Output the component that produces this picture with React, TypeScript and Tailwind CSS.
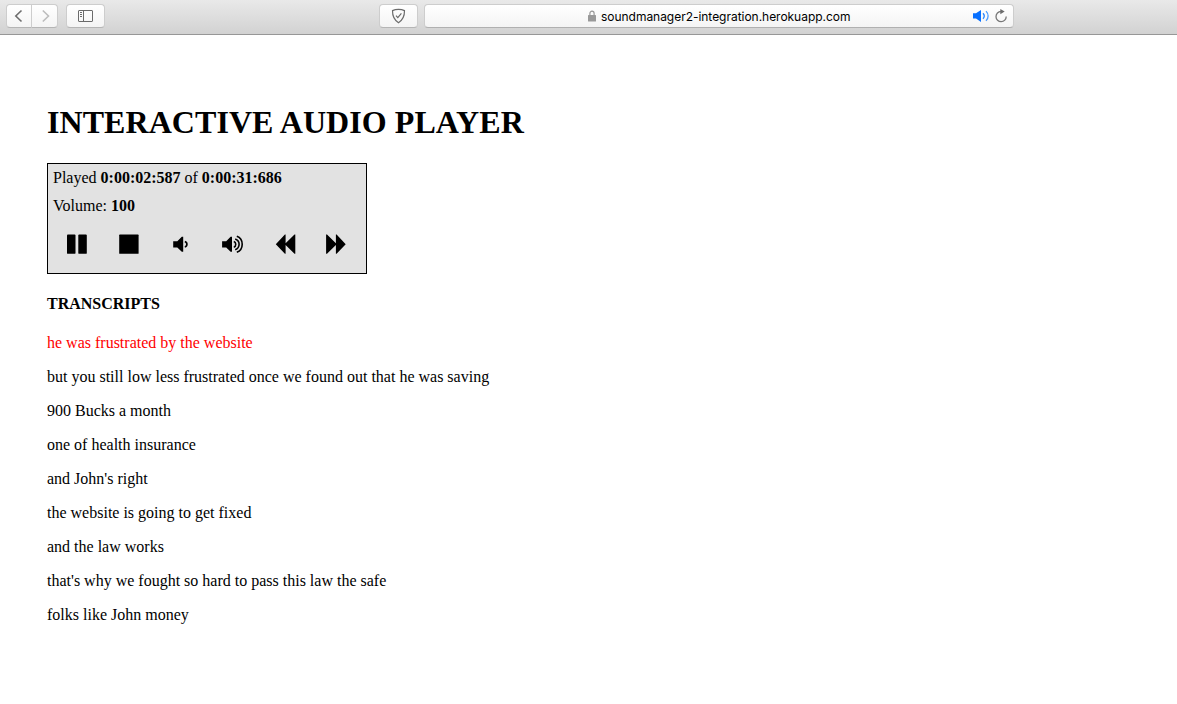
import type { ReactNode } from "react";

const lines = [
  "he was frustrated by the website",
  "but you still low less frustrated once we found out that he was saving",
  "900 Bucks a month",
  "one of health insurance",
  "and John's right",
  "the website is going to get fixed",
  "and the law works",
  "that's why we fought so hard to pass this law the safe",
  "folks like John money",
];

const chromeButton =
  "flex h-6 items-center justify-center border border-[#cdcdcd] border-b-[#b5b5b5] bg-linear-to-b from-white to-[#f4f4f4]";

function Control({ label, children }: { label: string; children: ReactNode }) {
  return (
    <button aria-label={label} className="h-6 w-[52px]">
      <svg width="52" height="24" viewBox="0 0 52 24" fill="black">
        {children}
      </svg>
    </button>
  );
}

function Toolbar() {
  return (
    <header className="flex h-[35px] items-start border-b border-[#979797] bg-linear-to-b from-[#e9e9e9] to-[#d2d2d2] pt-1 pl-1.5">
      <button aria-label="Back" className={`${chromeButton} w-[26px] rounded-l-[4px]`}>
        <svg width="24" height="22" viewBox="0 0 24 22" fill="none" stroke="#6e6e6e" strokeWidth="1.6">
          <path d="M14.5 5.5 8.8 11l5.7 5.5" />
        </svg>
      </button>
      <button aria-label="Forward" className={`${chromeButton} -ml-px w-[27px] rounded-r-[4px]`}>
        <svg width="24" height="22" viewBox="0 0 24 22" fill="none" stroke="#bdbdbd" strokeWidth="1.6">
          <path d="M9.8 5.5 15.5 11l-5.7 5.5" />
        </svg>
      </button>
      <button aria-label="Sidebar" className={`${chromeButton} ml-2 w-[39px] rounded-[4px]`}>
        <svg width="37" height="22" viewBox="0 0 37 22" fill="none" stroke="#6b6b6b">
          <rect x="11.5" y="5.5" width="14" height="11" rx="0.5" />
          <path d="M16.5 5.5v11M13 7.5h2M13 9.5h2M13 11.5h2" />
        </svg>
      </button>
      <button aria-label="Privacy" className={`${chromeButton} ml-[274px] w-[39px] rounded-[4px]`}>
        <svg width="37" height="22" viewBox="0 0 37 22" fill="none" stroke="#6b6b6b" strokeWidth="1.2">
          <path d="M18.5 4.3c2.2 0 4.2.4 6 1.3.1 5.6-1.2 9.3-6 12.1-4.8-2.8-6.1-6.5-6-12.1 1.8-.9 3.8-1.3 6-1.3Z" />
          <path d="m16 10.6 1.8 2 3.6-4.3" />
        </svg>
      </button>
      <div className="ml-[6px] flex h-6 w-[590px] items-center rounded-[4px] border border-[#cdcdcd] border-b-[#b0b0b0] bg-linear-to-b from-white to-[#f4f4f4]">
        <svg className="ml-[162px] shrink-0" width="11" height="14" viewBox="0 0 11 14">
          <path d="M2.9 7V4.3a2.1 2.1 0 0 1 4.2 0V7" fill="none" stroke="#999" strokeWidth="1.2" />
          <rect x="1" y="6" width="8" height="6.5" rx="0.5" fill="#999" />
        </svg>
        <span className="ml-[3px] w-[250px] pt-px font-['Inter',sans-serif] text-[12px] leading-5 tracking-[-0.03px] whitespace-nowrap text-black">
          soundmanager2-integration.herokuapp.com
        </span>
        <svg className="ml-[121px] shrink-0" width="18" height="14" viewBox="0 0 18 14">
          <path d="M1 4.2h3L9 1v12L4 9.6H1Z" fill="#0870ff" />
          <path d="M11 4.3c1.5 1.6 1.5 3.8 0 5.4" fill="none" stroke="#2785ff" strokeWidth="1.3" />
          <path d="M14 2.1c2.8 2.8 2.8 7 0 9.8" fill="none" stroke="#4a9bff" strokeWidth="1.3" />
        </svg>
        <svg className="ml-[4px] shrink-0" width="14" height="16" viewBox="0 0 14 16">
          <path d="M7 3.5a5.1 5.1 0 1 0 5.2 5" fill="none" stroke="#777" strokeWidth="1.3" />
          <path d="M6.3 1v5.2l4.4-2.6Z" fill="#6b6b6b" />
        </svg>
      </div>
    </header>
  );
}

function Player() {
  return (
    <section className="h-[111px] w-80 border border-black bg-[#e2e2e2] pt-[5px] leading-[18px]">
      <p className="pl-[5px]">
        Played <b>0:00:02:587</b> of <b>0:00:31:686</b>
      </p>
      <p className="mt-2.5 pl-[5px]">
        Volume: <b>100</b>
      </p>
      <div className="mt-[17px] flex pl-[3px]">
        <Control label="Pause">
          <rect x="16" y="2.6" width="8.5" height="19.2" rx="0.9" />
          <rect x="27.3" y="2.6" width="8.5" height="19.2" rx="0.9" />
        </Control>
        <Control label="Stop">
          <rect x="16.2" y="2.6" width="19.4" height="19.2" rx="0.6" />
        </Control>
        <Control label="Volume down">
          <path d="M18.2 9.2h4.1L26.8 4.8h1.4v15h-1.4l-4.5-4.4h-4.1Z" />
          <path d="M29.8 9.6c2.8.6 2.8 4.8 0 5.4" fill="none" stroke="black" strokeWidth="1.7" />
        </Control>
        <Control label="Volume up">
          <path d="M15.1 9.2h4.1l4.4-4.4H25v15h-1.4l-4.4-4.4h-4.1Z" />
          <path
            d="M26.8 9.4c2.6.8 2.6 5 0 5.8M28.2 6.9c5.2 1.8 5.2 9 0 10.8M29.8 4.3c7.2 2.6 7.2 13.4 0 16"
            fill="none"
            stroke="black"
            strokeWidth="1.6"
          />
        </Control>
        <Control label="Rewind">
          <path d="M26.6 2.6v8.7l8.9-8.7h.8v19.2h-.8l-8.9-8.7v8.7h-.7L16.8 12.2l9.1-9.6Z" />
        </Control>
        <Control label="Fast forward">
          <path d="M24.9 2.6v8.7l-8.9-8.7h-.9v19.2h.9l8.9-8.7v8.7h.7l9.1-9.6-9.1-9.6Z" />
        </Control>
      </div>
    </section>
  );
}

export default function App() {
  return (
    <div className="h-[704px] overflow-hidden bg-white font-['Liberation_Serif',serif] text-[16px] text-black">
      <Toolbar />
      <main className="pt-[69px] pl-[47px]">
        <h1 className="text-[32px] leading-[37px] font-bold tracking-[0.06px] whitespace-nowrap">
          INTERACTIVE AUDIO PLAYER
        </h1>
        <div className="pt-[22px]">
          <Player />
        </div>
        <h2 className="mt-[21px] leading-[18px] font-bold">TRANSCRIPTS</h2>
        <div className="mt-[21px] flex flex-col gap-4 leading-[18px]">
          {lines.map((line, i) => (
            <p key={line} className={i === 0 ? "text-[#ff0000]" : "text-black"}>
              {line}
            </p>
          ))}
        </div>
      </main>
    </div>
  );
}
